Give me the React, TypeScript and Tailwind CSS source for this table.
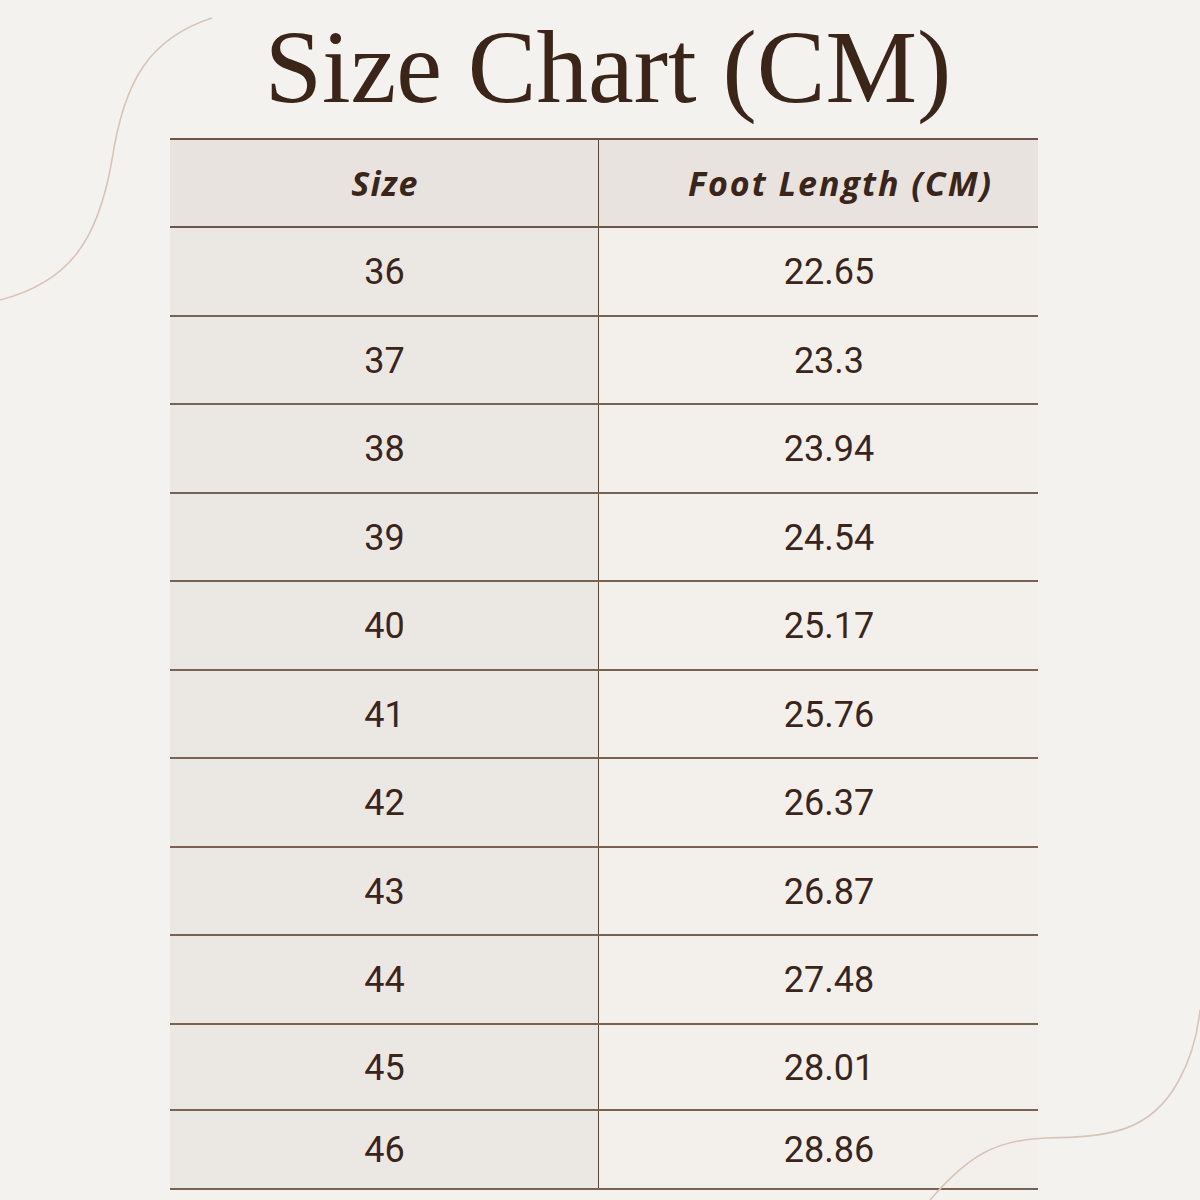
const rows: { size: string; length: string; h: string }[] = [
  { size: "36", length: "22.65", h: "h-[88.5px]" },
  { size: "37", length: "23.3", h: "h-[88.5px]" },
  { size: "38", length: "23.94", h: "h-[88.5px]" },
  { size: "39", length: "24.54", h: "h-[88.5px]" },
  { size: "40", length: "25.17", h: "h-[88.5px]" },
  { size: "41", length: "25.76", h: "h-[88.5px]" },
  { size: "42", length: "26.37", h: "h-[88.5px]" },
  { size: "43", length: "26.87", h: "h-[88.5px]" },
  { size: "44", length: "27.48", h: "h-[88.5px]" },
  { size: "45", length: "28.01", h: "h-[86px]" },
  { size: "46", length: "28.86", h: "h-[79px]" },
];

export default function App() {
  return (
    <div className="relative w-[1200px] h-[1200px] overflow-hidden bg-[#f4f2ef] text-[#3b2519]">
      {/* Title */}
      <h1 className="pt-[16px] pl-[16px] text-center font-['Liberation_Serif',serif] text-[103px] leading-[102px]">
        Size Chart (CM)
      </h1>

      {/* Table */}
      <div className="ml-[170px] mt-[20px] w-[868px] border-t-2 border-[#6e5646]">
        <div className="grid h-[88px] grid-cols-[429px_1fr] border-b-2 border-[#6e5646] bg-[#e8e3de] font-['Open_Sans',sans-serif] text-[34px] font-bold italic tracking-[1.3px]">
          <div className="flex items-center justify-center border-r-[1.5px] border-[#5a4436] pl-[2px]">
            Size
          </div>
          <div className="flex items-center justify-center pl-[44px] tracking-[2px]">Foot Length (CM)</div>
        </div>

        {rows.map((r) => (
          <div
            key={r.size}
            className={`grid ${r.h} grid-cols-[429px_1fr] border-b-2 border-[#7a6252] font-['Roboto',sans-serif] text-[36px]`}
          >
            <div className="flex items-center justify-center border-r-[1.5px] border-[#5a4436] bg-[#ebe7e2] pl-[1px] pt-[2px]">
              {r.size}
            </div>
            <div className="flex items-center justify-center bg-[#f3f0ec] pl-[21px] pt-[2px]">{r.length}</div>
          </div>
        ))}
      </div>

      {/* Decorative curves */}
      <svg
        className="pointer-events-none absolute left-0 top-0"
        width="1200"
        height="1200"
        viewBox="0 0 1200 1200"
        fill="none"
      >
        <path
          d="M0 300 C 70 282 98 240 112 160 C 124 80 150 38 212 18"
          stroke="#d8c4b8"
          strokeWidth="1.6"
        />
        <path
          d="M930 1200 C 968 1156 995 1140 1045 1138 C 1110 1137 1150 1132 1178 1082 C 1193 1055 1198 1030 1200 1010"
          stroke="#d8c4b8"
          strokeWidth="1.6"
        />
      </svg>
    </div>
  );
}
